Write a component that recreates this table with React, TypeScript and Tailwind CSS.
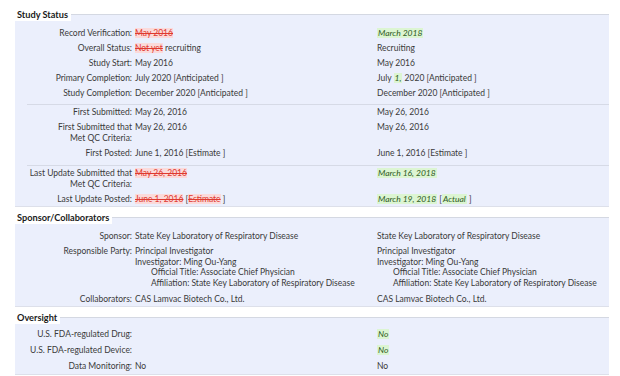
import type { ReactNode } from "react";

const Del = ({ children }: { children: ReactNode }) => (
  <span className="bg-[#fbdada] text-[#e0392f] line-through">{children}</span>
);

const Ins = ({ children }: { children: ReactNode }) => (
  <span className="bg-[#dcf5d2] px-[1px] italic text-[#2e5a1e]">{children}</span>
);

function Row({
  label,
  left,
  right,
  className = "py-[2px]",
}: {
  label: ReactNode;
  left?: ReactNode;
  right?: ReactNode;
  className?: string;
}) {
  return (
    <div className={`grid grid-cols-[117px_245px_1fr] ${className}`}>
      <div className="text-right">{label}</div>
      <div className="pl-[3px]">{left}</div>
      <div>{right}</div>
    </div>
  );
}

function Section({
  title,
  className,
  children,
}: {
  title: string;
  className: string;
  children: ReactNode;
}) {
  return (
    <section
      className={`relative border-t border-b border-t-[#d4d8e2] border-b-[#dde0ea] bg-[#ebeffc] ${className}`}
    >
      <div className="absolute -top-[7px] left-0 bg-white pl-[2px] pr-[3px] text-[9.2px] font-bold leading-[13px] text-[#1a1a1a]">
        {title}
      </div>
      {children}
    </section>
  );
}

const Sep = () => <div className="ml-[12px] border-t border-[#d6dae6]" />;

const Party = () => (
  <>
    <div>Principal Investigator</div>
    <div>Investigator: Ming Ou-Yang</div>
    <div className="pl-[16px]">Official Title: Associate Chief Physician</div>
    <div className="pl-[16px]">
      Affiliation: State Key Laboratory of Respiratory Disease
    </div>
  </>
);

export default function App() {
  return (
    <div className="h-[376px] w-[620px] overflow-hidden bg-white pl-[15px] pr-[11px] pt-[14px] font-['Lato','Noto_Sans',sans-serif] text-[8.5px] leading-[11px] text-[#3a3a3a]">
      <Section title="Study Status" className="pt-[11px]">
        <div className="pb-[3px]">
          <Row
            label="Record Verification:"
            left={<Del>May 2016</Del>}
            right={<Ins>March 2018</Ins>}
          />
          <Row
            label="Overall Status:"
            left={
              <>
                <Del>Not yet</Del> recruiting
              </>
            }
            right="Recruiting"
          />
          <Row label="Study Start:" left="May 2016" right="May 2016" />
          <Row
            label="Primary Completion:"
            left="July 2020 [Anticipated ]"
            right={
              <>
                July <Ins>1,</Ins> 2020 [Anticipated ]
              </>
            }
          />
          <Row
            label="Study Completion:"
            left="December 2020 [Anticipated ]"
            right="December 2020 [Anticipated ]"
          />
        </div>
        <Sep />
        <div className="pb-[4px]">
          <Row label="First Submitted:" left="May 26, 2016" right="May 26, 2016" />
          <Row
            label={
              <>
                First Submitted that
                <br />
                Met QC Criteria:
              </>
            }
            left="May 26, 2016"
            right="May 26, 2016"
          />
          <Row
            label="First Posted:"
            left="June 1, 2016 [Estimate ]"
            right="June 1, 2016 [Estimate ]"
          />
        </div>
        <Sep />
        <div>
          <Row
            label={
              <>
                Last Update Submitted that
                <br />
                Met QC Criteria:
              </>
            }
            left={<Del>May 26, 2016</Del>}
            right={<Ins>March 16, 2018</Ins>}
          />
          <Row
            label="Last Update Posted:"
            className="pb-[1px] pt-[2px]"
            left={
              <>
                <Del>June 1, 2016</Del> [<Del>Estimate</Del> ]
              </>
            }
            right={
              <>
                <Ins>March 19, 2018</Ins> [<Ins>Actual</Ins> ]
              </>
            }
          />
        </div>
      </Section>

      <Section title="Sponsor/Collaborators" className="mt-[10px] pt-[11px]">
        <Row
          label="Sponsor:"
          left="State Key Laboratory of Respiratory Disease"
          right="State Key Laboratory of Respiratory Disease"
        />
        <Row
          label="Responsible Party:"
          className="py-[2px] leading-[10.7px]"
          left={<Party />}
          right={<Party />}
        />
        <Row
          label="Collaborators:"
          className="pb-[1px] pt-[3px]"
          left="CAS Lamvac Biotech Co., Ltd."
          right="CAS Lamvac Biotech Co., Ltd."
        />
      </Section>

      <Section title="Oversight" className="mt-[10px] pt-[8px]">
        <Row
          label="U.S. FDA-regulated Drug:"
          className="py-[2px] leading-[12px]"
          right={<Ins>No</Ins>}
        />
        <Row
          label="U.S. FDA-regulated Device:"
          className="py-[2px] leading-[12px]"
          right={<Ins>No</Ins>}
        />
        <Row
          label="Data Monitoring:"
          className="py-[2px] leading-[12px]"
          left="No"
          right="No"
        />
      </Section>
    </div>
  );
}
